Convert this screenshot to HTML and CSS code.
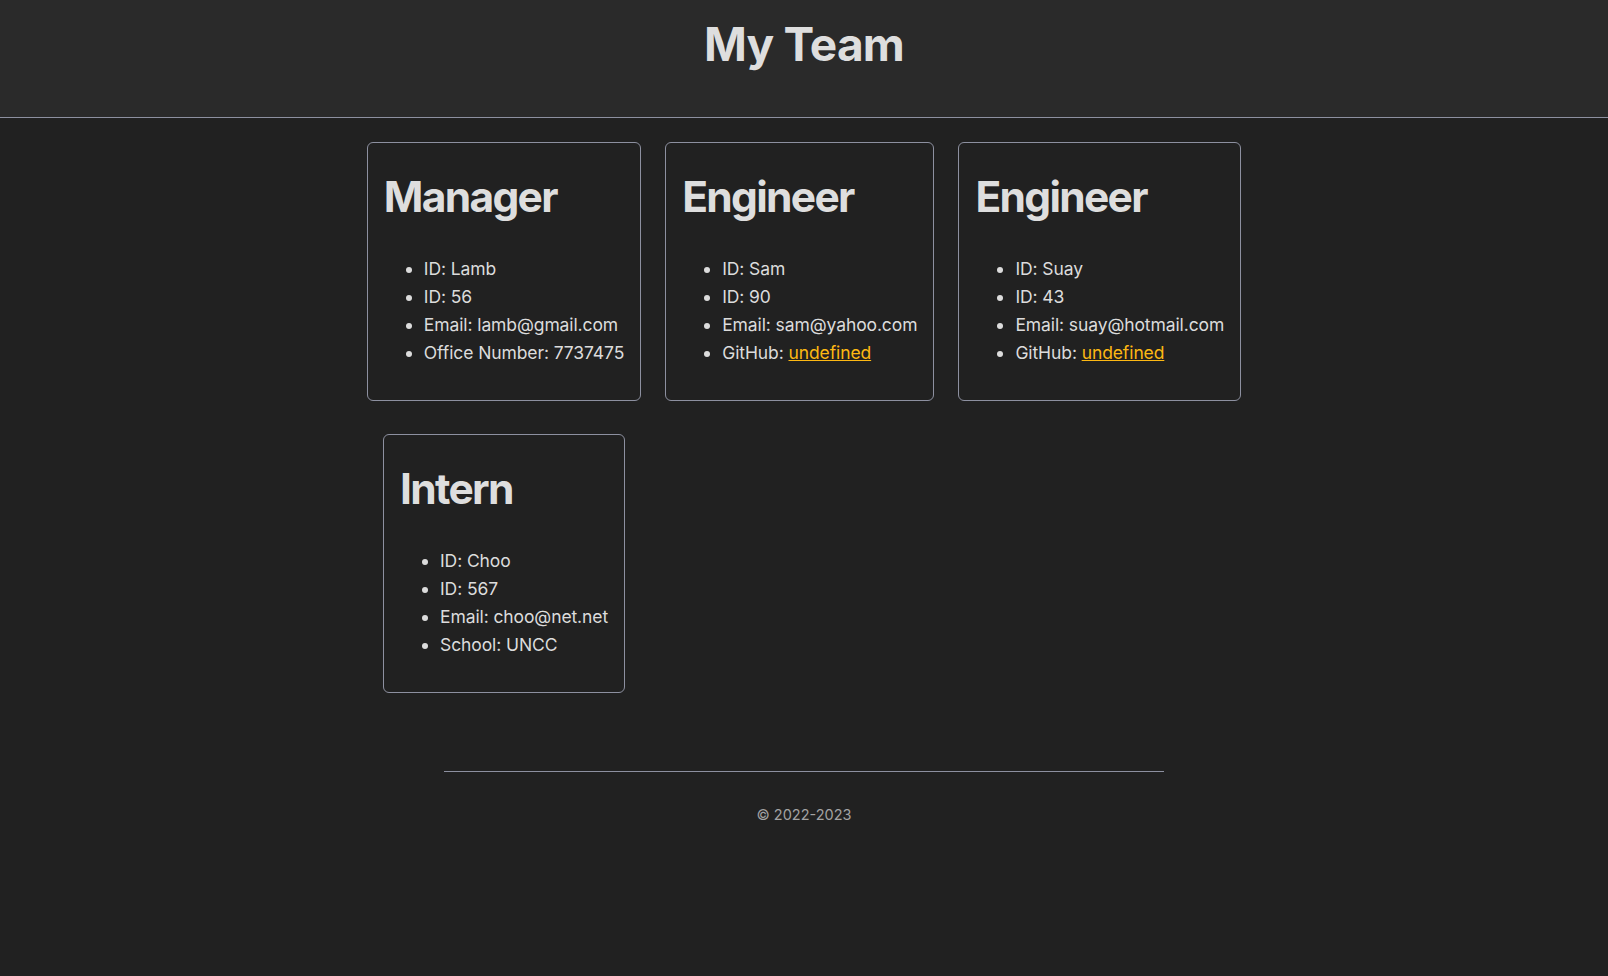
FILE: index.html
```html
<!DOCTYPE html>
<html lang="en">
<head>
<meta charset="UTF-8">
<title>My Team</title>
<link rel="stylesheet" href="styles.css">
</head>
<body>
<header class="site-header">
  <h1 class="site-title">My Team</h1>
</header>
<main class="team">
  <section class="card">
    <h2 class="card-title">Manager</h2>
    <ul class="card-list">
      <li>ID: Lamb</li>
      <li>ID: 56</li>
      <li>Email: lamb@gmail.com</li>
      <li>Office Number: 7737475</li>
    </ul>
  </section>
  <section class="card">
    <h2 class="card-title">Engineer</h2>
    <ul class="card-list">
      <li>ID: Sam</li>
      <li>ID: 90</li>
      <li>Email: sam@yahoo.com</li>
      <li>GitHub: <a href="#">undefined</a></li>
    </ul>
  </section>
  <section class="card">
    <h2 class="card-title">Engineer</h2>
    <ul class="card-list">
      <li>ID: Suay</li>
      <li>ID: 43</li>
      <li>Email: suay@hotmail.com</li>
      <li>GitHub: <a href="#">undefined</a></li>
    </ul>
  </section>
  <section class="card">
    <h2 class="card-title">Intern</h2>
    <ul class="card-list">
      <li>ID: Choo</li>
      <li>ID: 567</li>
      <li>Email: choo@net.net</li>
      <li>School: UNCC</li>
    </ul>
  </section>
</main>
<footer class="site-footer">
  <hr class="footer-rule">
  <p class="copyright">© 2022-2023</p>
</footer>
</body>
</html>
```
FILE: styles.css
```css
html, body {
  margin: 0;
  padding: 0;
}
body {
  background: #212121;
  color: #dcdcdc;
  font-family: Inter, "Noto Sans", "Liberation Sans", sans-serif;
  font-size: 17.5px;
  line-height: 28px;
  min-height: 976px;
}
.site-header {
  background: #2a2a2a;
  height: 117px;
  border-bottom: 1px solid #8d90a0;
  box-sizing: content-box;
  text-align: center;
}
.site-title {
  margin: 0;
  padding-top: 16px;
  font-size: 46px;
  line-height: 56px;
  font-weight: 700;
  color: #dedede;
  letter-spacing: -0.8px;
}
.team {
  display: grid;
  grid-template-columns: repeat(3, auto);
  justify-content: center;
  justify-items: center;
  align-items: start;
  column-gap: 24px;
  row-gap: 33px;
  margin-top: 24px;
}
.card {
  border: 1px solid #8d90a0;
  border-radius: 6px;
  padding: 16px;
}
.card-title {
  margin: 12px 0 33px;
  font-size: 42.5px;
  line-height: 1.2;
  font-weight: 700;
  color: #dedede;
  letter-spacing: -1.7px;
}
.card-list {
  margin: 0 0 17px;
  padding-left: 40px;
  letter-spacing: -0.1px;
}
.card-list a {
  color: #fdb813;
  text-decoration: underline;
}
.site-footer {
  margin-top: 78px;
  text-align: center;
}
.footer-rule {
  width: 720px;
  margin: 0 auto;
  border: 0;
  border-top: 1px solid #8d90a0;
}
.copyright {
  margin: 29px 0 0;
  font-size: 14.5px;
  color: #a3a3a3;
}
```
